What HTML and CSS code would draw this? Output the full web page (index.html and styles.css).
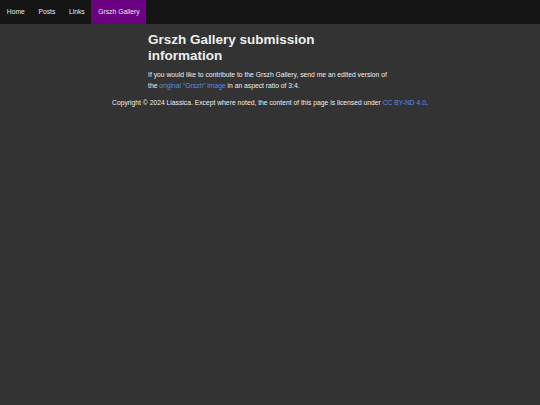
FILE: index.html
```html
<!DOCTYPE html>
<html lang="en">
<head>
<meta charset="utf-8">
<title>Grszh Gallery submission information</title>
<link rel="stylesheet" href="styles.css">
</head>
<body>
<nav class="nav">
  <a class="nav-link" href="#">Home</a>
  <a class="nav-link" href="#">Posts</a>
  <a class="nav-link" href="#">Links</a>
  <a class="nav-link active" href="#">Grszh Gallery</a>
</nav>
<main class="main">
  <h1 class="title">Grszh Gallery submission information</h1>
  <p class="text">If you would like to contribute to the Grszh Gallery, send me an edited version of the <a class="link" href="#">original “Grszh” image</a> in an aspect ratio of 3:4.</p>
</main>
<footer class="footer">Copyright © 2024 Liassica. Except where noted, the content of this page is licensed under <a class="link" href="#">CC BY-ND 4.0</a>.</footer>
</body>
</html>
```
FILE: styles.css
```css
html, body {
  margin: 0;
  padding: 0;
  background: #333333;
  color: #eeeeee;
  font-family: "Liberation Sans", Arial, sans-serif;
  font-size: 6.75px;
}
.nav {
  display: flex;
  background: #151515;
  height: 24px;
}
.nav-link {
  display: block;
  padding: 0 6.8px;
  line-height: 24px;
  color: #e8e8e8;
  text-decoration: none;
}
.nav-link.active {
  background: #6b0080;
}
.main {
  width: 244px;
  margin: 0 auto;
}
.title {
  font-size: 13.5px;
  line-height: 16px;
  margin: 8px 0 5px;
}
.text {
  line-height: 11px;
  margin: 0 0 6px;
}
.link {
  color: #5a8de0;
  text-decoration: none;
}
.footer {
  text-align: center;
  line-height: 11px;
}
```
